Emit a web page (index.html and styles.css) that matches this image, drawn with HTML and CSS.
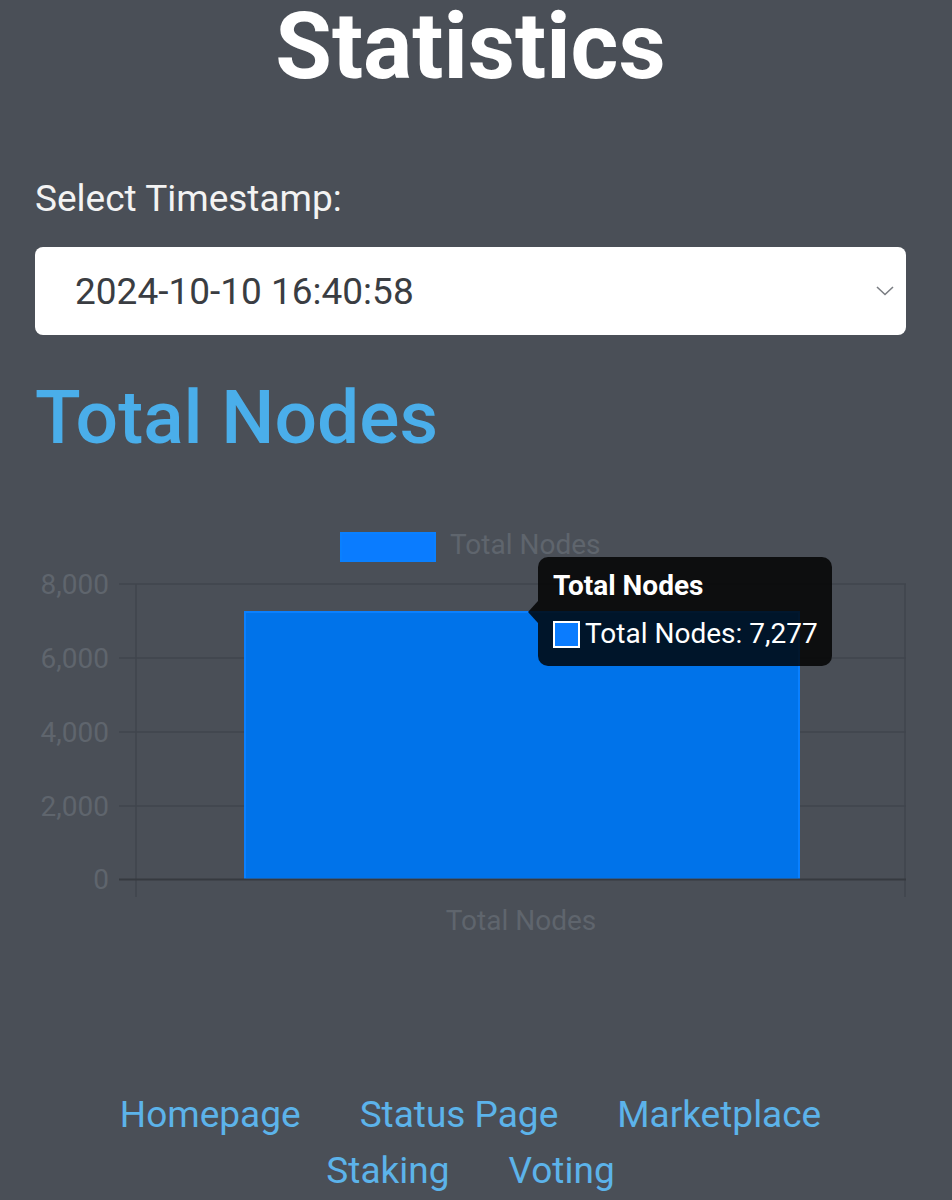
FILE: index.html
```html
<!DOCTYPE html>
<html lang="en">
<head>
<meta charset="utf-8">
<title>Statistics</title>
<link rel="stylesheet" href="styles.css">
</head>
<body>
<main class="page">
  <h1 class="title">Statistics</h1>
  <label class="field-label" for="ts">Select Timestamp:</label>
  <div class="select" id="ts">
    <span class="select-value">2024-10-10 16:40:58</span>
    <svg class="chevron" width="18" height="10" viewBox="0 0 18 10"><path d="M1 1 L9 8.5 L17 1" fill="none" stroke="#7a7d82" stroke-width="1.6"/></svg>
  </div>
  <h2 class="section-title">Total Nodes</h2>
  <div class="chart">
    <svg class="chart-svg" width="871" height="440" viewBox="0 0 871 440">
      <rect x="306" y="23" width="94" height="28" fill="#0a7cff" stroke="#0a80ff" stroke-width="2"/>
      <text x="415" y="44" class="legend-text">Total Nodes</text>
      <g stroke="#40454c" stroke-width="1.5">
        <line x1="84" y1="74" x2="871" y2="74"/>
        <line x1="84" y1="148" x2="871" y2="148"/>
        <line x1="84" y1="222" x2="871" y2="222"/>
        <line x1="84" y1="296" x2="871" y2="296"/>
        <line x1="101" y1="74" x2="101" y2="387"/>
        <line x1="870" y1="74" x2="870" y2="387"/>
      </g>
      <rect x="210" y="102" width="554" height="267" fill="#0073ea" stroke="#0a80ff" stroke-width="2"/>
      <line x1="84" y1="369.5" x2="871" y2="369.5" stroke="#363a40" stroke-width="2"/>
      <g class="axis-text" text-anchor="end">
        <text x="74" y="84">8,000</text>
        <text x="74" y="158">6,000</text>
        <text x="74" y="232">4,000</text>
        <text x="74" y="306">2,000</text>
        <text x="74" y="379">0</text>
      </g>
      <text x="486" y="420" text-anchor="middle" class="axis-text">Total Nodes</text>
    </svg>
    <div class="tooltip">
      <div class="tooltip-title">Total Nodes</div>
      <div class="tooltip-row"><span class="swatch"></span>Total Nodes: 7,277</div>
    </div>
  </div>
  <nav class="links">
    <a href="#">Homepage</a>
    <a href="#">Status Page</a>
    <a href="#">Marketplace</a>
    <a href="#">Staking</a>
    <a href="#">Voting</a>
  </nav>
</main>
</body>
</html>
```
FILE: styles.css
```css
html, body {
  margin: 0;
  padding: 0;
  background: #4a4f57;
}
body {
  font-family: Roboto, "Liberation Sans", sans-serif;
  color: #f2f2f2;
}
.page {
  padding: 2px 46px 0 35px;
}
.title {
  margin: 0;
  font-size: 92px;
  line-height: 90px;
  font-weight: 700;
  text-align: center;
  color: #ffffff;
}
.field-label {
  display: block;
  margin-top: 82px;
  font-size: 37px;
  line-height: 50px;
  color: #f3f3f3;
}
.select {
  margin-top: 23px;
  height: 88px;
  background: #ffffff;
  border-radius: 8px;
  display: flex;
  align-items: center;
  justify-content: space-between;
  padding: 0 12px 0 40px;
  box-sizing: border-box;
}
.select-value {
  font-size: 37px;
  color: #3a3d42;
}
.chevron {
  display: block;
}
.section-title {
  margin: 37px 0 0;
  font-size: 75px;
  line-height: 90px;
  font-weight: 500;
  color: #4aaeea;
}
.chart {
  position: relative;
  margin-top: 48px;
  height: 440px;
}
.chart-svg {
  display: block;
}
.legend-text, .axis-text {
  font-family: Roboto, "Liberation Sans", sans-serif;
  font-size: 28px;
  fill: #5f656d;
}
.tooltip {
  position: absolute;
  left: 503px;
  top: 47px;
  width: 294px;
  height: 109px;
  box-sizing: border-box;
  background: rgba(0, 0, 0, 0.82);
  border-radius: 10px;
  padding: 14px 0 0 15px;
  color: #ffffff;
  white-space: nowrap;
}
.tooltip::before {
  content: "";
  position: absolute;
  left: -10px;
  top: 44px;
  border-style: solid;
  border-width: 11px 10px 11px 0;
  border-color: transparent rgba(0, 0, 0, 0.82) transparent transparent;
}
.tooltip-title {
  font-size: 28px;
  font-weight: 700;
  line-height: 30px;
}
.tooltip-row {
  margin-top: 18px;
  font-size: 28px;
  line-height: 30px;
  display: flex;
  align-items: center;
}
.swatch {
  flex: none;
  width: 27px;
  height: 27px;
  box-sizing: border-box;
  border: 2px solid #ffffff;
  background: #0a7cff;
  margin-right: 5px;
}
.links {
  margin-top: 137px;
  display: flex;
  flex-wrap: wrap;
  justify-content: center;
  column-gap: 59px;
  padding: 0 40px;
}
.links a {
  font-size: 37px;
  line-height: 56px;
  color: #5cb3ea;
  text-decoration: none;
}
```
